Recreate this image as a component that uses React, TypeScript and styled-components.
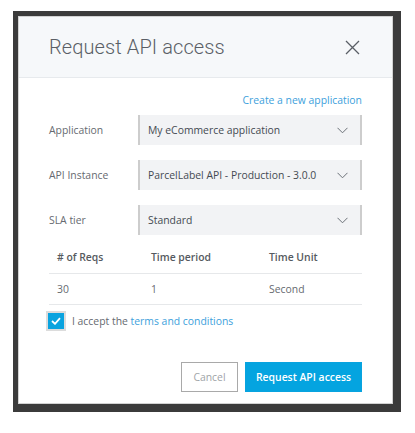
import React from "react";
import styled, { createGlobalStyle } from "styled-components";

const GlobalStyle = createGlobalStyle`
  html, body { margin: 0; padding: 0; background: #ffffff; }
  body { font-family: "Open Sans", "Liberation Sans", sans-serif; }
  * { box-sizing: border-box; }
`;

const Page = styled.div`
  padding: 11px 14px 21px 13px;
`;

const Frame = styled.div`
  background: #3b3b3b;
  padding: 5px 8px 8px 5px;
`;

const Modal = styled.div`
  background: #ffffff;
  border: 1px solid #d2d2d2;
  display: flex;
  flex-direction: column;
`;

const Header = styled.div`
  height: 61px;
  background: #f6f8fa;
  border-bottom: 1px solid #e7eaed;
  display: flex;
  align-items: center;
  justify-content: space-between;
  padding: 0 32px 0 30px;
`;

const Title = styled.h1`
  margin: 0;
  font-family: Roboto, "Liberation Sans", sans-serif;
  font-weight: 300;
  font-size: 20px;
  letter-spacing: 0.1px;
  color: #5a5f66;
`;

const CloseButton = styled.button`
  border: none;
  background: transparent;
  padding: 0;
  width: 16px;
  height: 16px;
  display: flex;
  align-items: center;
  justify-content: center;
  cursor: pointer;
`;

const Body = styled.div`
  padding: 14px 30px 11px 30px;
  display: flex;
  flex-direction: column;
`;

const LinkRow = styled.div`
  display: flex;
  justify-content: flex-end;
  height: 16px;
  align-items: center;
  margin-bottom: 7px;
`;

const Link = styled.a`
  font-size: 10.4px;
  color: #3d9fdc;
  text-decoration: none;
  cursor: pointer;
`;

const FormRow = styled.div`
  display: grid;
  grid-template-columns: 89px 1fr;
  align-items: center;
  margin-bottom: 15px;
  &:last-of-type { margin-bottom: 0; }
`;

const Label = styled.label`
  font-size: 10.4px;
  color: #666a70;
`;

const Select = styled.div`
  height: 30px;
  background: #f2f3f5;
  border-left: 2px solid #cdcdcd;
  border-right: 2px solid #cdcdcd;
  display: flex;
  align-items: center;
  justify-content: space-between;
  padding: 0 12px 0 8px;
  font-size: 10.4px;
  color: #444a52;
`;

const Fields = styled.div`
  display: flex;
  flex-direction: column;
`;

const Table = styled.div`
  display: flex;
  flex-direction: column;
`;

const TRow = styled.div<{ $head?: boolean }>`
  display: grid;
  grid-template-columns: 94px 118px 1fr;
  padding-left: 8px;
  border-bottom: 1px solid #e6e8ea;
  height: ${(p) => (p.$head ? "39px" : "31px")};
  align-items: ${(p) => (p.$head ? "end" : "center")};
  padding-bottom: ${(p) => (p.$head ? "8px" : "0")};
`;

const Cell = styled.div<{ $head?: boolean }>`
  font-size: 10.4px;
  line-height: 16px;
  font-weight: ${(p) => (p.$head ? 600 : 400)};
  color: ${(p) => (p.$head ? "#555a60" : "#666a70")};
`;

const CheckRow = styled.label`
  display: flex;
  align-items: center;
  gap: 6px;
  margin: 6px 0 0 -3px;
  font-size: 10.4px;
  color: #666a70;
`;

const CheckBox = styled.span`
  width: 20px;
  height: 20px;
  border: 2px solid #dcdcdc;
  background: #0aa3df;
  display: flex;
  align-items: center;
  justify-content: center;
`;

const Footer = styled.div`
  display: flex;
  justify-content: flex-end;
  gap: 7px;
  margin-top: 31px;
`;

const Button = styled.button<{ $primary?: boolean }>`
  height: 30px;
  padding: 0;
  white-space: nowrap;
  font-family: "Open Sans", "Liberation Sans", sans-serif;
  font-size: 10.4px;
  cursor: pointer;
  border: 1px solid ${(p) => (p.$primary ? "#08a3df" : "#a9a9a9")};
  background: ${(p) => (p.$primary ? "#04a4e0" : "#ffffff")};
  color: ${(p) => (p.$primary ? "#ffffff" : "#a0a4a8")};
  font-weight: ${(p) => (p.$primary ? 600 : 400)};
  width: ${(p) => (p.$primary ? "117px" : "57px")};
`;

const Chevron = () => (
  <svg width="11" height="7" viewBox="0 0 11 7">
    <path d="M0.5 0.8 L5.5 5.8 L10.5 0.8" fill="none" stroke="#6b7077" strokeWidth="1" />
  </svg>
);

const fields = [
  { label: "Application", value: "My eCommerce application" },
  { label: "API Instance", value: "ParcelLabel API - Production - 3.0.0" },
  { label: "SLA tier", value: "Standard" },
];

export default function App() {
  return (
    <>
      <GlobalStyle />
      <Page>
        <Frame>
          <Modal>
            <Header>
              <Title>Request API access</Title>
              <CloseButton aria-label="Close">
                <svg width="15" height="15" viewBox="0 0 15 15">
                  <path d="M1 1 L14 14 M14 1 L1 14" stroke="#5a5f66" strokeWidth="1.3" />
                </svg>
              </CloseButton>
            </Header>
            <Body>
              <LinkRow>
                <Link>Create a new application</Link>
              </LinkRow>
              <Fields>
                {fields.map((f) => (
                  <FormRow key={f.label}>
                    <Label>{f.label}</Label>
                    <Select>
                      <span>{f.value}</span>
                      <Chevron />
                    </Select>
                  </FormRow>
                ))}
              </Fields>
              <Table>
                <TRow $head>
                  <Cell $head># of Reqs</Cell>
                  <Cell $head>Time period</Cell>
                  <Cell $head>Time Unit</Cell>
                </TRow>
                <TRow>
                  <Cell>30</Cell>
                  <Cell>1</Cell>
                  <Cell>Second</Cell>
                </TRow>
              </Table>
              <CheckRow>
                <CheckBox>
                  <svg width="10" height="8" viewBox="0 0 10 8">
                    <path d="M1 4 L4 6.8 L9 1.2" fill="none" stroke="#ffffff" strokeWidth="1.8" />
                  </svg>
                </CheckBox>
                <span>
                  I accept the <Link>terms and conditions</Link>
                </span>
              </CheckRow>
              <Footer>
                <Button>Cancel</Button>
                <Button $primary>Request API access</Button>
              </Footer>
            </Body>
          </Modal>
        </Frame>
      </Page>
    </>
  );
}
